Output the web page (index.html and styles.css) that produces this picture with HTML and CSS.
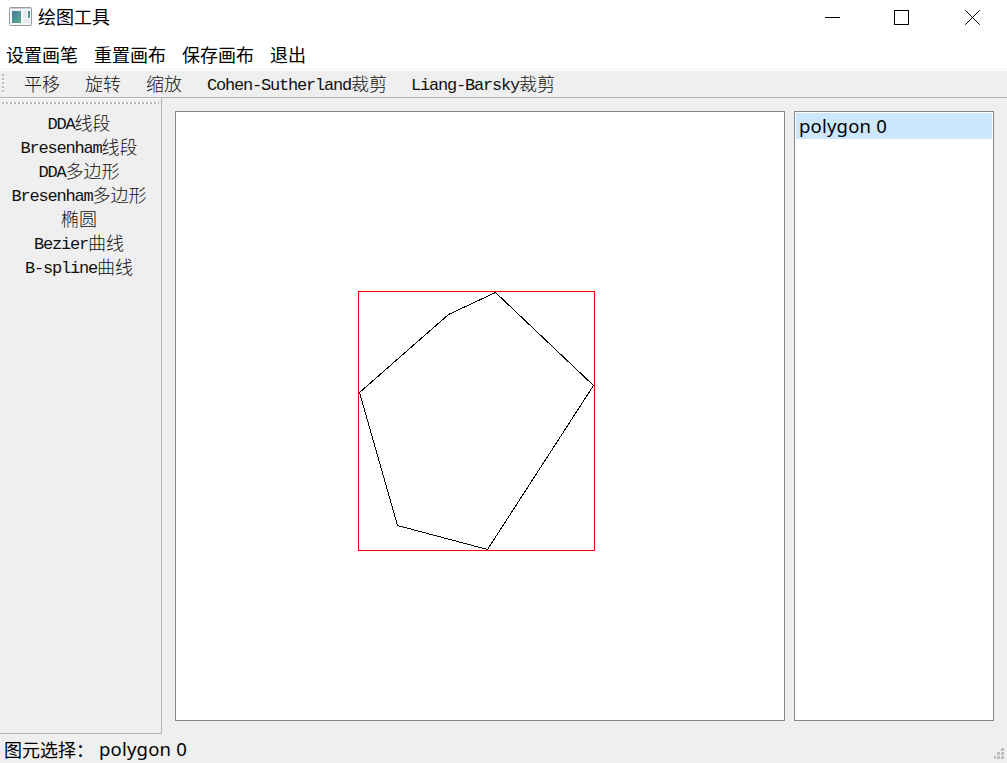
FILE: index.html
```html
<!DOCTYPE html>
<html lang="zh-CN">
<head>
<meta charset="utf-8">
<title>绘图工具</title>
<link rel="stylesheet" href="styles.css">
</head>
<body>
<div class="window">
  <header class="titlebar">
    <svg class="app-icon" width="24" height="20" viewBox="0 0 24 20">
      <defs><linearGradient id="pane" x1="0" y1="0" x2="1" y2="1"><stop offset="0" stop-color="#4679a8"/><stop offset="1" stop-color="#5cae82"/></linearGradient></defs>
      <rect x=".5" y=".5" width="22" height="18" rx="1" fill="#f7f8f9" stroke="#929ba4"/>
      <path d="M1 1.5h21" stroke="#c9d2dc"/>
      <rect x="3" y="4" width="9" height="12" fill="url(#pane)"/>
      <rect x="14" y="4" width="4" height="7" fill="#e6eaec"/>
      <rect x="14" y="12" width="7" height="4" fill="#e6eaec"/>
      <rect x="19" y="4" width="2" height="7" fill="url(#pane)"/>
    </svg>
    <span class="title">绘图工具</span>
    <svg class="controls" width="157" height="16" viewBox="0 0 157 16" shape-rendering="crispEdges" fill="none" stroke="#000">
      <path d="M0 7.5h15"/>
      <rect x="69.5" y=".5" width="14" height="14"/>
      <path d="M140.3 .3l14.4 14.4M154.7 .3l-14.4 14.4" shape-rendering="auto"/>
    </svg>
  </header>
  <nav class="menubar"><span>设置画笔</span><span>重置画布</span><span>保存画布</span><span>退出</span></nav>
  <div class="toolbar">
    <i class="grip grip-v"></i>
    <span class="tool">平移</span><span class="tool">旋转</span><span class="tool">缩放</span>
    <span class="tool"><b>Cohen-Sutherland</b>裁剪</span><span class="tool"><b>Liang-Barsky</b>裁剪</span>
  </div>
  <main class="workspace">
    <aside class="sidebar">
      <i class="grip grip-h"></i>
      <span class="shape"><b>DDA</b>线段</span>
      <span class="shape"><b>Bresenham</b>线段</span>
      <span class="shape"><b>DDA</b>多边形</span>
      <span class="shape"><b>Bresenham</b>多边形</span>
      <span class="shape">椭圆</span>
      <span class="shape"><b>Bezier</b>曲线</span>
      <span class="shape"><b>B-spline</b>曲线</span>
    </aside>
    <section class="canvas">
      <svg width="608" height="608" viewBox="176 112 608 608" shape-rendering="crispEdges" fill="none">
        <path d="M495.5 292.5L448.5 314.5L359.5 392.5L397.5 525.5L487.5 549.5L593.5 385.5Z" stroke="#000"/>
        <rect x="358.5" y="291.5" width="236" height="259" stroke="#f00"/>
      </svg>
    </section>
    <section class="list"><div class="item latin">polygon 0</div></section>
  </main>
  <footer class="status">
    <span class="status-label">图元选择：</span><span class="latin">polygon 0</span>
    <svg class="resize" width="10" height="11" viewBox="0 0 10 11" fill="#bfbfbf"><path d="M7 0h3v3h-3zM3 4h3v3h-3zM7 4h3v3h-3zM0 8h2v3h-2zM3 8h3v3h-3zM7 8h3v3h-3z"/></svg>
  </footer>
</div>
</body>
</html>
```
FILE: styles.css
```css
* { box-sizing: border-box; }
body { margin: 0; overflow: hidden; }
.window {
  width: 1007px; height: 763px;
  display: flex; flex-direction: column;
  background: #efefef; color: #000;
  font: 18px/24px "Noto Sans CJK SC", sans-serif;
}
.titlebar { height: 40px; display: flex; align-items: flex-start; background: #fff; padding: 7px 25px 0 9px; }
.title { margin: -3px 0 0 5px; }
.controls { margin: 3px 0 0 auto; }
.menubar { height: 29px; display: flex; gap: 16px; padding: 2px 6px 0; background: #fff; }
.toolbar {
  height: 29px; display: flex; gap: 25px; align-items: flex-start;
  padding: 1px 0 0 2px; border-top: 1px solid #f1f1f1; border-bottom: 1px solid #b4b4b4;
  box-shadow: inset 0 1px #fff;
}
.tool, .shape { color: #111; white-space: nowrap; font-weight: 300; }
.tool b, .shape b { font: 400 17px/20px "Liberation Mono", monospace; letter-spacing: -1.2px; vertical-align: 1px; }
.tool:last-child { margin-left: -1px; }
.grip { display: block; flex: none; }
.grip-v { width: 2px; height: 19px; margin: 3px -5px 0 0; background: repeating-linear-gradient(#bbb 0 2px, #fff 2px 3px, transparent 3px 4px); }
.workspace { height: 636px; display: flex; }
.sidebar {
  width: 162px; padding: 4px 3px 0 0;
  display: flex; flex-direction: column; align-items: center;
  border-right: 1px solid #b4b4b4; border-bottom: 1px solid #b4b4b4;
  box-shadow: inset 0 1px #fff;
}
.grip-h { width: 157px; height: 2px; margin: 0 0 6px 2px; background: repeating-linear-gradient(90deg, #bbb 0 2px, #fff 2px 3px, transparent 3px 4px); }
.shape { height: 24px; }
.canvas { width: 610px; height: 610px; margin: 13px 9px 0 13px; border: 1px solid #828790; background: #fff; }
.canvas svg { display: block; }
.list { width: 200px; height: 610px; margin-top: 13px; border: 1px solid #828790; background: #fff; padding: 1px; }
.item { height: 26px; background: #cce8ff; padding-left: 3px; }
.latin { font-family: "Noto Sans", sans-serif; font-size: 18.5px; line-height: 26px; letter-spacing: .2px; }
.status { height: 29px; display: flex; align-items: center; padding: 0 3px 0 4px; }
.status-label { width: 95px; }
.resize { margin: 9px 0 0 auto; }
```
